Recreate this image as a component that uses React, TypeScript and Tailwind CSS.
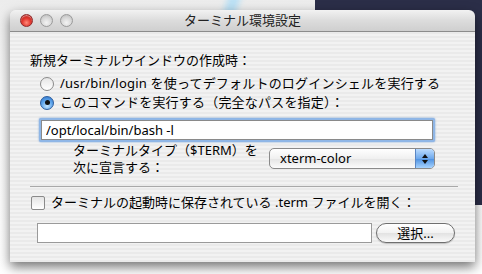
import { useState } from 'react';

function Light({ color }: { color: 'red' | 'gray' }) {
  return (
    <span
      className={
        color === 'red'
          ? 'block h-[13px] w-[13px] rounded-full border border-[#8e2a2a] bg-[radial-gradient(circle_at_50%_70%,#ff8a7a_0%,#e2382f_45%,#a5140f_100%)] shadow-[inset_0_1px_1px_rgba(255,255,255,0.5)]'
          : 'block h-[13px] w-[13px] rounded-full border border-[#9a9a9a] bg-[radial-gradient(circle_at_50%_70%,#f4f4f4_0%,#d6d6d6_55%,#b4b4b4_100%)]'
      }
    />
  );
}

function Radio({ on }: { on?: boolean }) {
  return on ? (
    <span className="flex h-[14px] w-[14px] shrink-0 items-center justify-center rounded-full border border-[#2c5d9e] bg-[radial-gradient(circle_at_50%_75%,#c6e6ff_0%,#5fa6ec_50%,#2b6fc6_100%)]">
      <span className="h-[5px] w-[5px] rounded-full bg-[#111]" />
    </span>
  ) : (
    <span className="block h-[14px] w-[14px] shrink-0 rounded-full border border-[#8a8a8a] bg-[linear-gradient(#e6e6e6,#ffffff)]" />
  );
}

export default function App() {
  const [mode, setMode] = useState<'login' | 'cmd'>('cmd');
  const [cmd, setCmd] = useState('/opt/local/bin/bash -l');

  return (
    <div className="relative h-[274px] w-[482px] overflow-hidden bg-[linear-gradient(#ececec,#f7f7f7_30%,#ffffff)] font-['Noto_Sans','Noto_Sans_CJK_JP',sans-serif] text-[13px] text-black">
      {/* desktop behind the window */}
      <div className="absolute left-[315px] top-0 h-[205px] w-[167px] bg-[#2b2e48]" />
      <div className="absolute left-[226px] top-[-12px] h-[34px] w-[12px] rotate-[18deg] bg-[#b9e0f5] blur-[3px]" />

      {/* window */}
      <div className="absolute left-[10px] top-[10px] flex h-[252px] w-[465px] flex-col overflow-hidden rounded-t-[6px] shadow-[0_5px_12px_rgba(0,0,0,0.55)]">
        {/* title bar */}
        <div className="relative flex h-[22px] shrink-0 items-center border-b border-[#8c8c8c] bg-[linear-gradient(#f2f2f2,#dcdcdc_50%,#cfcfcf)] pl-[10px]">
          <div className="flex gap-[7px]">
            <Light color="red" />
            <Light color="gray" />
            <Light color="gray" />
          </div>
          <div className="absolute inset-0 flex items-center justify-center text-[13px] leading-none text-[#222]">
            ターミナル環境設定
          </div>
        </div>

        {/* body */}
        <div className="flex flex-1 flex-col bg-[repeating-linear-gradient(0deg,#eaeaea_0px,#eaeaea_2px,#f2f2f2_2px,#f2f2f2_4px)] pl-[20px] pt-[20px]">
          <div className="h-[17px] leading-[17px]">新規ターミナルウインドウの作成時：</div>

          <div className="mt-[5px] flex flex-col pl-[10px] tracking-[0.2px]">
            <label className="flex h-[19px] items-center gap-[6px]" onClick={() => setMode('login')}>
              <Radio on={mode === 'login'} />
              <span className="leading-[19px]">/usr/bin/login を使ってデフォルトのログインシェルを実行する</span>
            </label>
            <label className="flex h-[19px] items-center gap-[6px]" onClick={() => setMode('cmd')}>
              <Radio on={mode === 'cmd'} />
              <span className="leading-[19px]">このコマンドを実行する（完全なパスを指定）：</span>
            </label>
          </div>

          <div className="ml-[9px] mt-[6px] h-[24px] w-[396px] rounded-[2px] bg-[#8fb6e6] p-[2px] shadow-[0_0_2px_#6c9bd6]">
            <input
              value={cmd}
              onChange={(e) => setCmd(e.target.value)}
              className="h-full w-full border border-[#8a8a8a] bg-white px-[4px] text-[13px] leading-[18px] outline-none"
            />
          </div>

          <div className="flex">
            <div className="ml-[43px] flex w-[196px] flex-col">
              <span className="block leading-[17px]">ターミナルタイプ（$TERM）を</span>
              <span className="block leading-[17px]">次に宣言する：</span>
            </div>
            <div className="mt-[6px] flex h-[21px] w-[166px] overflow-hidden rounded-[5px] border border-[#8a8a8a] bg-[linear-gradient(#ffffff,#f0f0f0_50%,#e4e4e4_51%,#fbfbfb)]">
              <div className="flex-1 pl-[10px] leading-[19px]">xterm-color</div>
              <div className="flex w-[19px] flex-col items-center justify-center gap-[2px] border-l border-[#5a86c4] bg-[linear-gradient(#bcdcff,#6fa9ec_50%,#4b8fe0_51%,#a8d4ff)]">
                <span className="h-0 w-0 border-x-[3px] border-b-[4px] border-x-transparent border-b-[#111]" />
                <span className="h-0 w-0 border-x-[3px] border-t-[4px] border-x-transparent border-t-[#111]" />
              </div>
            </div>
          </div>

          <div className="mt-[10px] h-px w-[428px] bg-[#a9a9a9]" />

          <label className="ml-[1px] mt-[6px] flex h-[19px] items-center gap-[6px]">
            <span className="block h-[14px] w-[14px] rounded-[2px] border border-[#8a8a8a] bg-[linear-gradient(#e4e4e4,#ffffff)]" />
            <span className="leading-[19px]">ターミナルの起動時に保存されている .term ファイルを開く：</span>
          </label>

          <div className="ml-[7px] mt-[11px] flex items-center gap-[4px]">
            <input className="h-[20px] w-[335px] border border-[#9a9a9a] bg-white outline-none" />
            <button className="h-[20px] w-[79px] rounded-full border border-[#6f6f6f] bg-[linear-gradient(#ffffff,#f2f2f2_50%,#e2e2e2_51%,#fafafa)] text-[13px] leading-[18px] shadow-[0_1px_1px_rgba(0,0,0,0.2)]">
              選択...
            </button>
          </div>
        </div>
      </div>
    </div>
  );
}
